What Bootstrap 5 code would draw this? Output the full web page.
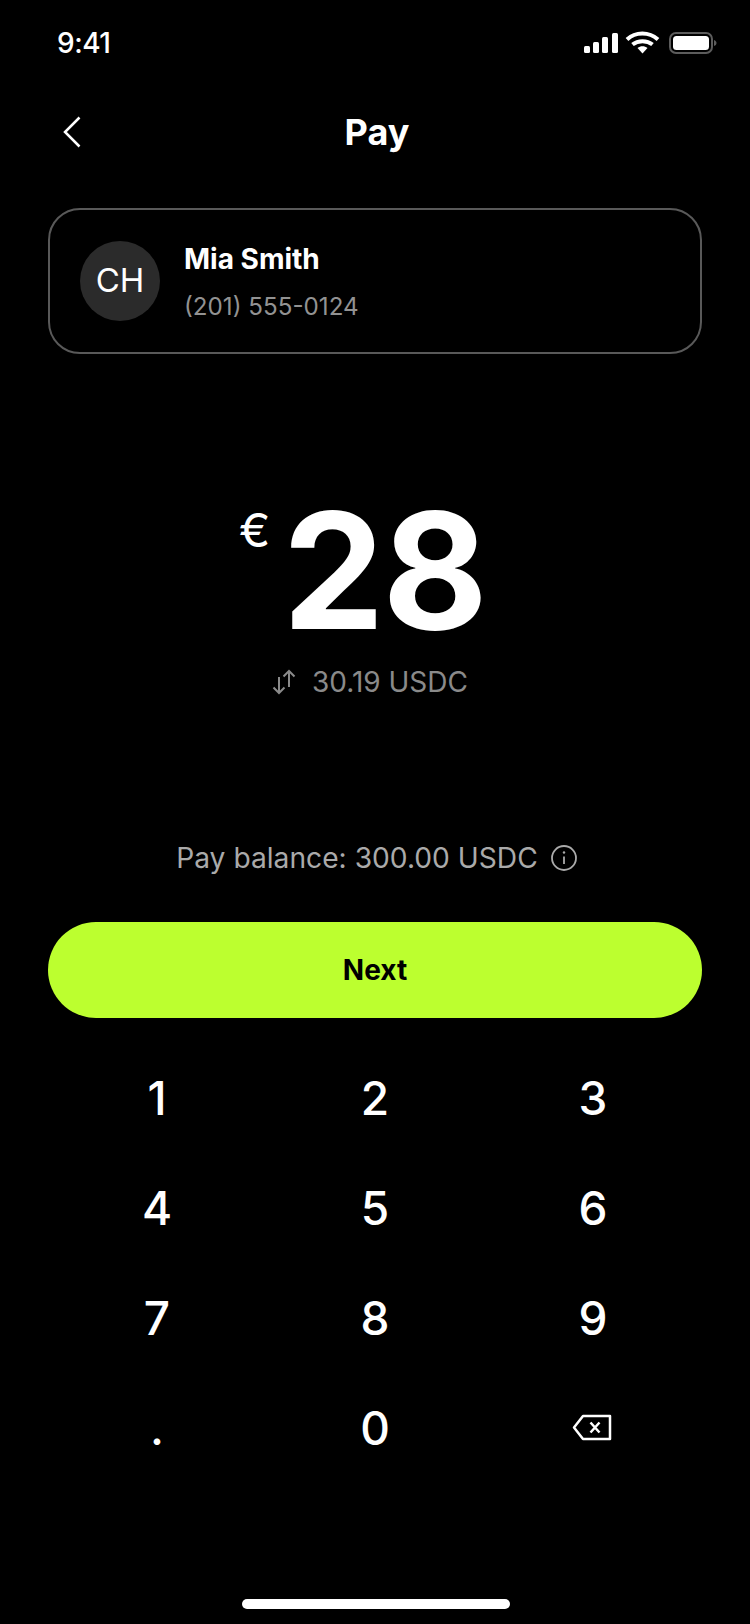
<!DOCTYPE html>
<html lang="en">
<head>
  <meta charset="UTF-8" />
  <meta name="viewport" content="width=device-width, initial-scale=1.0" />
  <title>Pay</title>
  <link rel="stylesheet" href="https://cdn.jsdelivr.net/npm/bootstrap@5.3.3/dist/css/bootstrap.min.css">
  <style>
    body {
      background-color: #000;
      color: #fff;
      font-family: Inter, "Liberation Sans", sans-serif;
    }
    .screen { width: 750px; height: 1624px; }
    .status-row { height: 85px; padding: 0 33px 0 57px; }
    .status-time { font-size: 28px; font-weight: 500; letter-spacing: -.5px; }
    .title-row { height: 94px; padding: 0 48px 0 52px; }
    .title-text { font-size: 36px; font-weight: 700; line-height: 1; }
    .back-btn { left: 63px; top: 31px; line-height: 0; }
    .contact-box {
      margin: 29px 48px 0;
      height: 146px;
      padding: 0 30px;
      border: 2px solid #595959;
      border-radius: 32px;
    }
    .avatar-dot {
      width: 80px;
      height: 80px;
      background-color: #2b2b2b;
      font-size: 33px;
    }
    .contact-text { padding-top: 3px; }
    .contact-name { font-size: 28px; font-weight: 700; line-height: 32px; }
    .contact-phone { font-size: 24.2px; line-height: 30px; color: #929292; margin-top: 17px; }
    .amount-wrap { margin-top: 119px; height: 193px; padding-right: 25px; }
    .amount-sign { font-size: 47px; font-weight: 400; line-height: 1; margin-top: 33px; margin-right: 12px; }
    .amount-value { font-size: 162px; font-weight: 700; line-height: 194px; letter-spacing: -2px; }
    .convert-row { color: #8a8a8a; font-size: 28px; line-height: 32px; padding-right: 10px; }
    .balance-row { color: #aaa; font-size: 28.2px; line-height: 34px; margin-top: 143px; padding-left: 4px; }
    .next-btn {
      display: block;
      margin: 47px 48px 0;
      width: 654px;
      height: 96px;
      border: 0;
      border-radius: 48px;
      background-color: #bcff2f;
      color: #000;
      font-size: 28px;
      font-weight: 700;
    }
    .next-btn:hover, .next-btn:active { background-color: #bcff2f !important; color: #000 !important; }
    .keypad {
      display: grid;
      grid-template-columns: repeat(3, 218px);
      grid-auto-rows: 110px;
      margin: 25px 48px 0;
      justify-content: center;
    }
    .key-cell { font-size: 46px; font-weight: 450; line-height: 1; }
    .key-icon { margin: 0 2px 2px 0; }
    .home-bar { width: 268px; height: 10px; background-color: #fff; border-radius: 5px; left: 242px; top: 1599px; }
  </style>
</head>
<body class="m-0">
  <div class="screen position-relative overflow-hidden">
    <div class="status-row d-flex align-items-center justify-content-between">
      <span class="status-time">9:41</span>
      <svg width="134" height="24" viewBox="0 0 134 24" fill="#fff">
        <rect x="1" y="15" width="6" height="7" rx="1.5"/>
        <rect x="10" y="11" width="6" height="11" rx="1.5"/>
        <rect x="19" y="6" width="6" height="16" rx="1.5"/>
        <rect x="29" y="2" width="6" height="20" rx="1.5"/>
        <path d="M44 8.5C52.5 .5 66 .5 75 8.5" fill="none" stroke="#fff" stroke-width="4"/>
        <path d="M49.5 13.5C55 9 64 9 69.5 13.5" fill="none" stroke="#fff" stroke-width="4"/>
        <path d="M54.5 17L59.5 22.5L64.500 17C61.500 14.500 57.500 14.500 54.500 17Z"/>
        <rect x="87" y="2" width="42" height="20" rx="6" fill="none" stroke="#5c5c5c" stroke-width="2"/>
        <rect x="90" y="5" width="36" height="14" rx="3.500"/>
        <path d="M131 9v6c1.500-.5 2.500-1.500 2.500-3s-1-2.500-2.500-3z" fill="#5c5c5c"/>
      </svg>
    </div>
    <div class="title-row position-relative d-flex align-items-center justify-content-center">
      <a class="back-btn position-absolute" href="#" aria-label="Back">
        <svg width="18" height="32" viewBox="0 0 18 32" fill="none" stroke="#fff" stroke-width="2.500"><path d="M16.500 1.500L2 16L16.500 30.500"/></svg>
      </a>
      <span class="title-text">Pay</span>
    </div>
    <div class="contact-box d-flex align-items-center gap-4">
      <div class="avatar-dot rounded-circle d-flex align-items-center justify-content-center flex-shrink-0">CH</div>
      <div class="contact-text">
        <div class="contact-name">Mia Smith</div>
        <div class="contact-phone">(201) 555-0124</div>
      </div>
    </div>
    <div class="amount-wrap d-flex justify-content-center align-items-start">
      <span class="amount-sign">€</span>
      <span class="amount-value">28</span>
    </div>
    <div class="convert-row d-flex justify-content-center align-items-center gap-3">
      <svg width="24" height="26" viewBox="0 0 24 26" fill="none" stroke="#8a8a8a" stroke-width="2"><path d="M7 8V24M1.500 18.500L7 24L12.500 18.500M17 18V2M11.500 7.500L17 2L22.500 7.500"/></svg>
      <span>30.19 USDC</span>
    </div>
    <div class="balance-row d-flex justify-content-center align-items-center gap-2">
      <span>Pay balance: 300.00 USDC</span>
      <svg class="ms-1" width="28" height="28" viewBox="0 0 28 28" fill="none" stroke="#aaa" stroke-width="1.800"><circle cx="14" cy="14" r="12"/><path d="M14 12.500V20"/><circle cx="14" cy="8.500" r="1.200" fill="#aaa" stroke="none"/></svg>
    </div>
    <button class="btn next-btn" type="button">Next</button>
    <div class="keypad text-center">
      <div class="key-cell d-flex align-items-center justify-content-center">1</div>
      <div class="key-cell d-flex align-items-center justify-content-center">2</div>
      <div class="key-cell d-flex align-items-center justify-content-center">3</div>
      <div class="key-cell d-flex align-items-center justify-content-center">4</div>
      <div class="key-cell d-flex align-items-center justify-content-center">5</div>
      <div class="key-cell d-flex align-items-center justify-content-center">6</div>
      <div class="key-cell d-flex align-items-center justify-content-center">7</div>
      <div class="key-cell d-flex align-items-center justify-content-center">8</div>
      <div class="key-cell d-flex align-items-center justify-content-center">9</div>
      <div class="key-cell d-flex align-items-center justify-content-center">.</div>
      <div class="key-cell d-flex align-items-center justify-content-center">0</div>
      <div class="key-cell d-flex align-items-center justify-content-center">
        <svg class="key-icon" width="40" height="27" viewBox="0 0 40 27" fill="none" stroke="#fff" stroke-width="2.500" stroke-linejoin="round"><path d="M11 2H38V25H11L2 13.500Z"/><path d="M18.500 8.500L27.500 18.500M27.500 8.500L18.500 18.500"/></svg>
      </div>
    </div>
    <div class="home-bar position-absolute"></div>
  </div>
  <script src="https://cdn.jsdelivr.net/npm/bootstrap@5.3.3/dist/js/bootstrap.bundle.min.js"></script>
</body>
</html>
